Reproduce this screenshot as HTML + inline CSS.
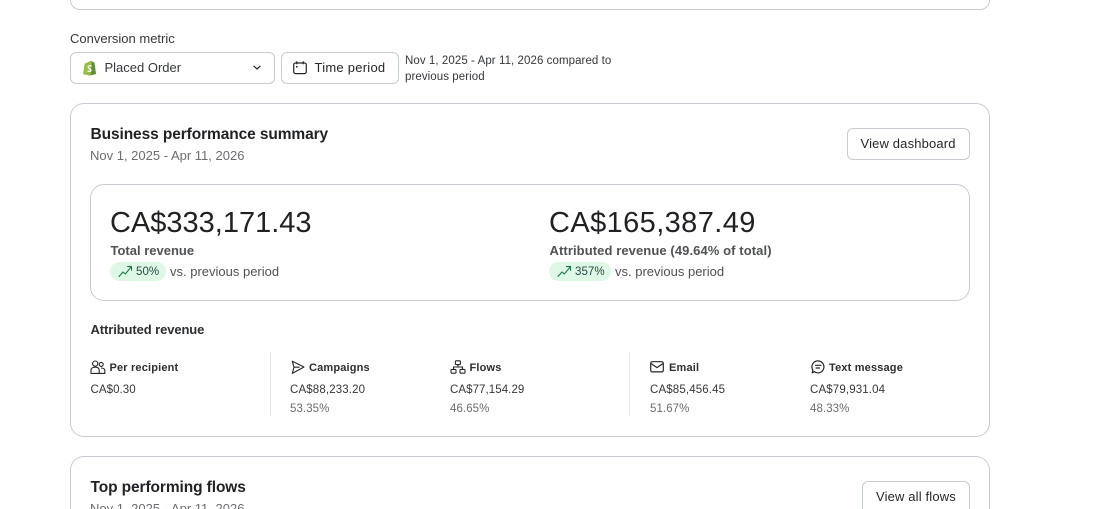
<!DOCTYPE html>
<html lang="en">
<head>
<meta charset="utf-8">
<title>Business performance</title>
<style>
html,body{margin:0;padding:0;background:#fff;width:1114px;height:509px;overflow:hidden;}
#p{position:relative;width:1114px;height:509px;overflow:hidden;font-family:"Liberation Sans",sans-serif;color:#242628;}
.a{position:absolute;white-space:nowrap;}
.box{position:absolute;box-sizing:border-box;border:1px solid #c9cbd3;background:#fff;}
.t{position:absolute;white-space:nowrap;line-height:16px;}
.s13{font-size:13px;}
.s11{font-size:11.5px;letter-spacing:.07px;}
.v{letter-spacing:.14px;}
.sb{font-size:11px;font-weight:bold;letter-spacing:.17px;color:#2c2e31;}
.g{color:#6b6d72;}
.m{color:#505256;}
.b{font-weight:bold;}
svg{position:absolute;display:block;overflow:visible;}
.pill{position:absolute;background:#dff8e6;border-radius:10px;height:19px;}
</style>
</head>
<body>
<div id="p">
<div class="box" style="left:70px;top:0;width:920px;height:10px;border-top:0;border-radius:0 0 14px 14px;"></div>

<div class="t s13" style="left:70px;top:31px;color:#35373a;">Conversion metric</div>
<div class="box" style="left:70px;top:52px;width:205px;height:32px;border-radius:6px;"></div>
<svg style="left:82px;top:60px;" width="15" height="16" viewBox="0 0 15 16">
  <path d="M2.6 3.6 L9 .8 L12.4 2.8 L14 14 L7.8 15.6 L1 14.2 Z" fill="#95bf47"/>
  <path d="M9.8 1.2 L12.4 2.8 L14 14 L8.6 15.4 Z" fill="#5e8e3e"/>
  <path d="M9.6 6.2 C8.2 5.4 6.2 5.8 6.2 7.2 C6.2 8.6 9 8.6 9 10.2 C9 11.6 7 11.6 5.6 10.8" fill="none" stroke="#fff" stroke-width="1.3"/>
</svg>
<div class="t s13" style="left:104.5px;top:60px;color:#35373a;">Placed Order</div>
<svg style="left:252px;top:64px;" width="10" height="8" viewBox="0 0 10 8"><path d="M2 2.2 L5 5 L8 2.2" fill="none" stroke="#242628" stroke-width="1.2" stroke-linecap="round" stroke-linejoin="round"/></svg>

<div class="box" style="left:281px;top:52px;width:118px;height:32px;border-radius:6px;"></div>
<svg style="left:292px;top:60px;" width="16" height="16" viewBox="0 0 16 16">
  <rect x="1.7" y="3" width="12.6" height="10.6" rx="1.8" fill="none" stroke="#242628" stroke-width="1.2"/>
  <path d="M4.8 1.2V4.2M11.2 1.2V4.2" fill="none" stroke="#242628" stroke-width="1.2"/>
  <rect x="4" y="6" width="1.5" height="1.5" fill="#242628"/>
</svg>
<div class="t s13" style="left:314.5px;top:60px;letter-spacing:.25px;">Time period</div>

<div class="t s11" style="left:405px;top:53px;color:#35373a;">Nov 1, 2025 - Apr 11, 2026 compared to</div>
<div class="t s11" style="left:405px;top:69px;color:#35373a;">previous period</div>

<div class="box" style="left:70px;top:103px;width:920px;height:334px;border-radius:14px;"></div>
<div class="t b" style="left:90.5px;top:127px;font-size:15.5px;color:#1f2124;letter-spacing:-.1px;">Business performance summary</div>
<div class="t s13 g" style="left:90px;top:147.5px;">Nov 1, 2025 - Apr 11, 2026</div>
<div class="box" style="left:847px;top:128px;width:123px;height:32px;border-radius:6px;"></div>
<div class="t s13" style="left:860.5px;top:135.5px;letter-spacing:.15px;">View dashboard</div>

<div class="box" style="left:90px;top:184px;width:880px;height:117px;border-radius:14px;"></div>

<div class="t" style="left:110px;top:205.5px;font-size:29px;line-height:34px;color:#1f2124;">CA$333,171.43</div>
<div class="t s13 b m" style="left:110.5px;top:242.5px;">Total revenue</div>
<div class="pill" style="left:110px;top:262px;width:56px;"></div>
<svg style="left:118px;top:264px;" width="15" height="15" viewBox="0 0 15 15"><path d="M1 12.5 L5 8 L7.3 10 L13 3.2 M9.5 2.6 L13.4 2.4 L13.6 6.2" fill="none" stroke="#16794a" stroke-width="1.1" stroke-linecap="round" stroke-linejoin="round"/></svg>
<div class="t s11" style="left:136px;top:263.5px;color:#27494a;">50%</div>
<div class="t s13 m" style="left:170px;top:263.5px;">vs. previous period</div>

<div class="t" style="left:549px;top:205.5px;font-size:29px;line-height:34px;color:#1f2124;letter-spacing:.4px;">CA$165,387.49</div>
<div class="t s13 b m" style="left:549.5px;top:242.5px;letter-spacing:.09px;">Attributed revenue (49.64% of total)</div>
<div class="pill" style="left:549px;top:262px;width:62px;"></div>
<svg style="left:557px;top:264px;" width="15" height="15" viewBox="0 0 15 15"><path d="M1 12.5 L5 8 L7.3 10 L13 3.2 M9.5 2.6 L13.4 2.4 L13.6 6.2" fill="none" stroke="#16794a" stroke-width="1.1" stroke-linecap="round" stroke-linejoin="round"/></svg>
<div class="t s11" style="left:575px;top:263.5px;color:#27494a;">357%</div>
<div class="t s13 m" style="left:615px;top:263.5px;">vs. previous period</div>

<div class="t s13 b" style="left:90.5px;top:321.5px;color:#2c2e31;letter-spacing:-.1px;">Attributed revenue</div>

<svg style="left:90px;top:360px;" width="16" height="15" viewBox="0 0 16 15">
  <circle cx="5.2" cy="3.6" r="2.6" fill="none" stroke="#242628" stroke-width="1.1"/>
  <path d="M1 13.4V10.2C1 8.4 2.6 7.2 5.2 7.2 7.8 7.2 9.2 8.4 9.2 10.2V13.4Z" fill="none" stroke="#242628" stroke-width="1.1" stroke-linejoin="round"/>
  <circle cx="11.2" cy="4.4" r="2" fill="none" stroke="#242628" stroke-width="1.1"/>
  <path d="M9.2 13.4H14.8V10.6C14.8 9 13.4 8 11 8" fill="none" stroke="#242628" stroke-width="1.1" stroke-linejoin="round"/>
</svg>
<div class="t sb" style="left:109.5px;top:359.5px;">Per recipient</div>
<div class="t s11" style="left:90.5px;top:381.5px;color:#35373a;">CA$0.30</div>

<div class="a" style="left:270px;top:352px;width:1px;height:64px;background:#e6e7ea;"></div>

<svg style="left:291px;top:360px;" width="14" height="15" viewBox="0 0 14 15"><path d="M1.3 1.2 L13 7 L1.3 13.4 L3 7.2 Z M3 7.2 H8.6" fill="none" stroke="#242628" stroke-width="1.1" stroke-linejoin="round"/></svg>
<div class="t sb" style="left:309px;top:359.5px;">Campaigns</div>
<div class="t s11 v" style="left:290px;top:381.5px;color:#35373a;">CA$88,233.20</div>
<div class="t s11 g" style="left:290px;top:400.5px;">53.35%</div>

<svg style="left:450px;top:360px;" width="16" height="15" viewBox="0 0 16 15">
  <rect x="5.4" y=".8" width="5" height="3.8" rx=".8" fill="none" stroke="#242628" stroke-width="1.1"/>
  <rect x="1" y="9.4" width="5" height="3.8" rx=".8" fill="none" stroke="#242628" stroke-width="1.1"/>
  <rect x="10" y="9.4" width="5" height="3.8" rx=".8" fill="none" stroke="#242628" stroke-width="1.1"/>
  <path d="M8 4.6V7H3.5V9.4M8 7H12.5V9.4" fill="none" stroke="#242628" stroke-width="1.1"/>
</svg>
<div class="t sb" style="left:469.5px;top:359.5px;">Flows</div>
<div class="t s11" style="left:450px;top:381.5px;color:#35373a;">CA$77,154.29</div>
<div class="t s11 g" style="left:450px;top:400.5px;">46.65%</div>

<div class="a" style="left:629px;top:352px;width:1px;height:64px;background:#e6e7ea;"></div>

<svg style="left:650px;top:361px;" width="14" height="12" viewBox="0 0 14 12">
  <rect x=".7" y=".7" width="12.6" height="10.2" rx="1.6" fill="none" stroke="#242628" stroke-width="1.2"/>
  <path d="M1.2 2.6 L7 6.6 L12.8 2.6" fill="none" stroke="#242628" stroke-width="1.2"/>
</svg>
<div class="t sb" style="left:669px;top:359.5px;">Email</div>
<div class="t s11 v" style="left:650px;top:381.5px;color:#35373a;">CA$85,456.45</div>
<div class="t s11 g" style="left:650px;top:400.5px;">51.67%</div>

<svg style="left:811px;top:360px;" width="14" height="14" viewBox="0 0 14 14">
  <path d="M7 .9 A6 6 0 1 1 3.2 11.6 L1.2 12.8 L1.9 10.2 A6 6 0 0 1 7 .9 Z" fill="none" stroke="#242628" stroke-width="1.2" stroke-linejoin="round"/>
  <path d="M4 5.3H10.4M4.6 8H9" fill="none" stroke="#242628" stroke-width="1.2"/>
</svg>
<div class="t sb" style="left:829px;top:359.5px;">Text message</div>
<div class="t s11 v" style="left:810px;top:381.5px;color:#35373a;">CA$79,931.04</div>
<div class="t s11 g" style="left:810px;top:400.5px;">48.33%</div>

<div class="box" style="left:70px;top:456px;width:920px;height:53px;border-bottom:0;border-radius:14px 14px 0 0;"></div>
<div class="t b" style="left:90.5px;top:480px;font-size:15.5px;color:#1f2124;letter-spacing:-.1px;">Top performing flows</div>
<div class="t s13 g" style="left:90px;top:500.5px;height:8.5px;overflow:hidden;">Nov 1, 2025 - Apr 11, 2026</div>
<div class="box" style="left:862px;top:481px;width:108px;height:28px;border-bottom:0;border-radius:6px 6px 0 0;"></div>
<div class="t s13" style="left:876px;top:488.5px;letter-spacing:.15px;">View all flows</div>
</div>
</body>
</html>
